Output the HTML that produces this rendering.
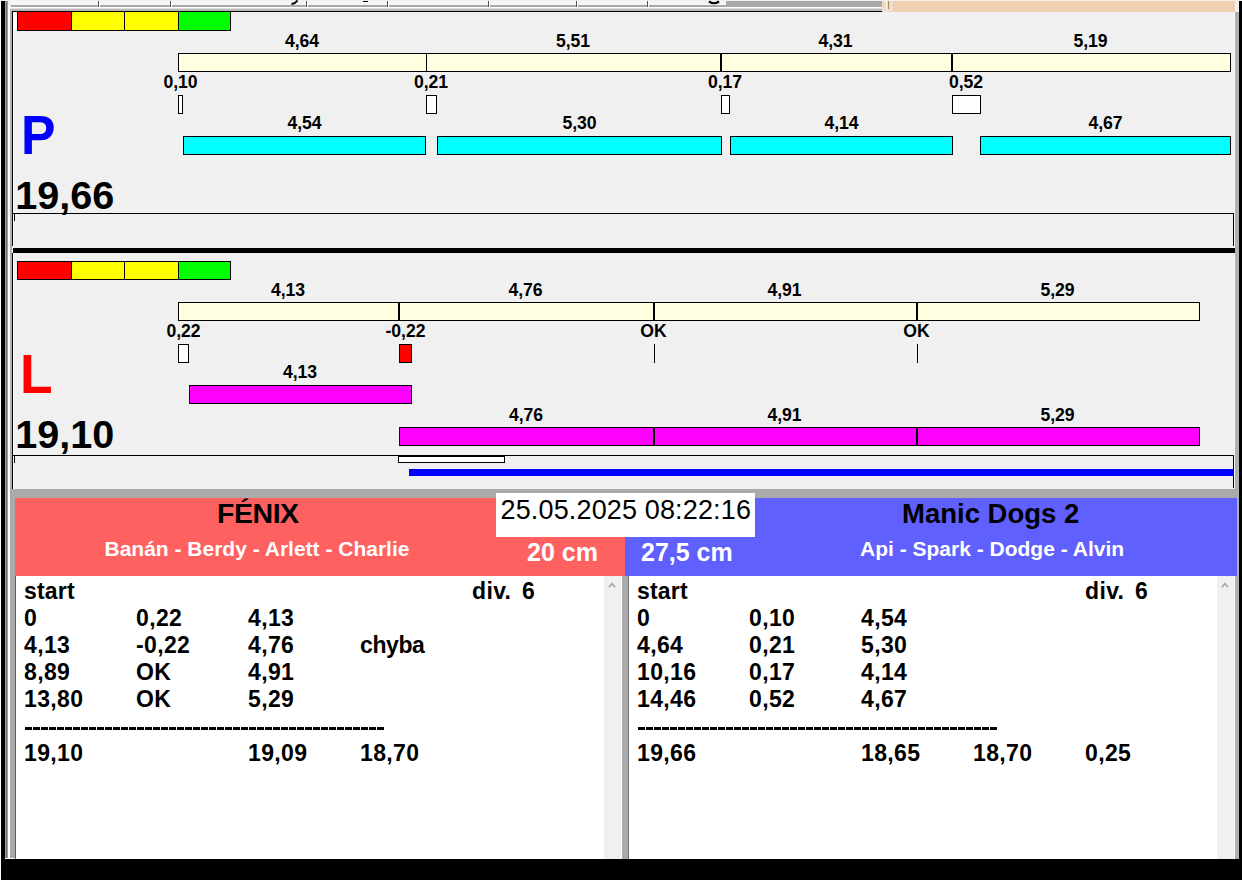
<!DOCTYPE html>
<html><head><meta charset="utf-8"><style>
html,body{margin:0;padding:0;width:1242px;height:880px;overflow:hidden;background:#f0f0f0;}
body{position:relative;font-family:"Liberation Sans",sans-serif;}
body>div,body>svg{position:absolute;white-space:pre;}
</style></head><body>
<div style="left:0px;top:0px;width:1242px;height:880px;background:#f0f0f0;"></div>
<div style="left:0px;top:0px;width:1px;height:859px;background:#ffffff;"></div>
<div style="left:1px;top:1px;width:4px;height:858px;background:#000;"></div>
<div style="left:5px;top:1px;width:1px;height:858px;background:#a0a0a0;"></div>
<div style="left:6px;top:1px;width:1px;height:858px;background:#6e6e6e;"></div>
<div style="left:7px;top:1px;width:1px;height:858px;background:#a0a0a0;"></div>
<div style="left:8px;top:7px;width:2px;height:852px;background:#ffffff;"></div>
<div style="left:10px;top:9px;width:2px;height:480px;background:#b0b0b0;"></div>
<div style="left:12px;top:11px;width:1px;height:478px;background:#000;"></div>
<div style="left:13px;top:12px;width:1px;height:477px;background:#ffffff;"></div>
<div style="left:11px;top:1px;width:715px;height:4px;background:#f6f6f6;"></div>
<div style="left:11px;top:5px;width:715px;height:2px;background:#a8a8a8;"></div>
<div style="left:98px;top:1px;width:1px;height:6px;background:#505050;"></div>
<div style="left:99px;top:1px;width:1px;height:6px;background:#ffffff;"></div>
<div style="left:170px;top:1px;width:1px;height:6px;background:#505050;"></div>
<div style="left:171px;top:1px;width:1px;height:6px;background:#ffffff;"></div>
<div style="left:306px;top:1px;width:1px;height:6px;background:#505050;"></div>
<div style="left:307px;top:1px;width:1px;height:6px;background:#ffffff;"></div>
<div style="left:387px;top:1px;width:1px;height:6px;background:#505050;"></div>
<div style="left:388px;top:1px;width:1px;height:6px;background:#ffffff;"></div>
<div style="left:488px;top:1px;width:1px;height:6px;background:#505050;"></div>
<div style="left:489px;top:1px;width:1px;height:6px;background:#ffffff;"></div>
<div style="left:576px;top:1px;width:1px;height:6px;background:#505050;"></div>
<div style="left:577px;top:1px;width:1px;height:6px;background:#ffffff;"></div>
<div style="left:647px;top:1px;width:1px;height:6px;background:#505050;"></div>
<div style="left:648px;top:1px;width:1px;height:6px;background:#ffffff;"></div>
<div style="left:726px;top:1px;width:1px;height:6px;background:#505050;"></div>
<div style="left:727px;top:1px;width:1px;height:6px;background:#ffffff;"></div>
<div style="left:726px;top:1px;width:156px;height:6px;background:#aaaaaa;"></div>
<div style="left:8px;top:7px;width:874px;height:1px;background:#ffffff;"></div>
<div style="left:10px;top:8px;width:872px;height:1px;background:#e0e0e0;"></div>
<div style="left:10px;top:9px;width:872px;height:2px;background:#b8b8b8;"></div>
<div style="left:12px;top:11px;width:870px;height:1px;background:#000;"></div>
<svg style="left:289px;top:0px" width="12" height="6"><path d="M2.5 3.5 Q5.5 4.5 8.5 0.5" stroke="#000" stroke-width="2" fill="none"/></svg>
<div style="left:363px;top:1px;width:5px;height:1px;background:#000;"></div>
<svg style="left:706px;top:0px" width="14" height="6"><path d="M3 1.5 Q8 5 13 1.5" stroke="#000" stroke-width="2.2" fill="none"/></svg>
<div style="left:882px;top:1px;width:353px;height:11px;background:#f0d0b0;"></div>
<div style="left:882px;top:1px;width:11px;height:11px;background:#eddccc;"></div>
<div style="left:886px;top:0px;width:1px;height:12px;background:#fff8e0;"></div>
<div style="left:888px;top:1px;width:1px;height:8px;background:#a08868;"></div>
<div style="left:1234px;top:12px;width:1px;height:847px;background:#f6f6f6;"></div>
<div style="left:1235px;top:12px;width:4px;height:847px;background:#b0b0b0;"></div>
<div style="left:1239px;top:1px;width:3px;height:879px;background:#000;"></div>
<div style="left:0px;top:859px;width:1242px;height:21px;background:#000;"></div>
<div style="left:0px;top:0px;width:1px;height:880px;background:#ffffff;"></div>
<div style="left:13px;top:12px;width:4px;height:18px;background:#ffffff;"></div>
<div style="left:17px;top:11px;width:212px;height:18px;background:#ff0000;border:1px solid #000;"></div>
<div style="left:71px;top:11px;width:1px;height:20px;background:#000;"></div>
<div style="left:72px;top:12px;width:52px;height:18px;background:#ffff00;"></div>
<div style="left:124px;top:11px;width:1px;height:20px;background:#000;"></div>
<div style="left:125px;top:12px;width:53px;height:18px;background:#ffff00;"></div>
<div style="left:178px;top:11px;width:1px;height:20px;background:#000;"></div>
<div style="left:179px;top:12px;width:51px;height:18px;background:#00ff00;"></div>
<div style="left:178px;top:53px;width:1051px;height:17px;background:#ffffe1;border:1px solid #000;"></div>
<div style="left:426px;top:53px;width:1px;height:19px;background:#000;"></div>
<div style="left:720px;top:53px;width:2px;height:19px;background:#000;"></div>
<div style="left:951px;top:53px;width:2px;height:19px;background:#000;"></div>
<div style="left:152.0px;width:300px;text-align:center;top:32.70px;font-size:17.6px;line-height:17.6px;font-weight:bold;color:#000;">4,64</div>
<div style="left:423.0px;width:300px;text-align:center;top:32.70px;font-size:17.6px;line-height:17.6px;font-weight:bold;color:#000;">5,51</div>
<div style="left:685.5px;width:300px;text-align:center;top:32.70px;font-size:17.6px;line-height:17.6px;font-weight:bold;color:#000;">4,31</div>
<div style="left:940.5px;width:300px;text-align:center;top:32.70px;font-size:17.6px;line-height:17.6px;font-weight:bold;color:#000;">5,19</div>
<div style="left:30.5px;width:300px;text-align:center;top:74.20px;font-size:17.6px;line-height:17.6px;font-weight:bold;color:#000;">0,10</div>
<div style="left:281px;width:300px;text-align:center;top:74.20px;font-size:17.6px;line-height:17.6px;font-weight:bold;color:#000;">0,21</div>
<div style="left:575px;width:300px;text-align:center;top:74.20px;font-size:17.6px;line-height:17.6px;font-weight:bold;color:#000;">0,17</div>
<div style="left:816px;width:300px;text-align:center;top:74.20px;font-size:17.6px;line-height:17.6px;font-weight:bold;color:#000;">0,52</div>
<div style="left:178px;top:95px;width:3px;height:17px;background:#ffffff;border:1px solid #000;"></div>
<div style="left:426px;top:95px;width:9px;height:17px;background:#ffffff;border:1px solid #000;"></div>
<div style="left:721px;top:95px;width:7px;height:17px;background:#ffffff;border:1px solid #000;"></div>
<div style="left:952px;top:95px;width:27px;height:17px;background:#ffffff;border:1px solid #000;"></div>
<div style="left:183px;top:136px;width:241px;height:17px;background:#00ffff;border:1px solid #000;"></div>
<div style="left:154.5px;width:300px;text-align:center;top:115.20px;font-size:17.6px;line-height:17.6px;font-weight:bold;color:#000;">4,54</div>
<div style="left:437px;top:136px;width:283px;height:17px;background:#00ffff;border:1px solid #000;"></div>
<div style="left:429.5px;width:300px;text-align:center;top:115.20px;font-size:17.6px;line-height:17.6px;font-weight:bold;color:#000;">5,30</div>
<div style="left:730px;top:136px;width:221px;height:17px;background:#00ffff;border:1px solid #000;"></div>
<div style="left:691.5px;width:300px;text-align:center;top:115.20px;font-size:17.6px;line-height:17.6px;font-weight:bold;color:#000;">4,14</div>
<div style="left:980px;top:136px;width:249px;height:17px;background:#00ffff;border:1px solid #000;"></div>
<div style="left:955.5px;width:300px;text-align:center;top:115.20px;font-size:17.6px;line-height:17.6px;font-weight:bold;color:#000;">4,67</div>
<div style="left:20.5px;top:107.64px;font-size:55px;line-height:55px;font-weight:bold;color:#0000ff;transform:scaleX(0.94);transform-origin:0 0;">P</div>
<div style="left:15.2px;top:176.08px;font-size:39.6px;line-height:39.6px;font-weight:bold;color:#000;">19,66</div>
<div style="left:13px;top:213px;width:1221px;height:1px;background:#000;"></div>
<div style="left:1233px;top:213px;width:1px;height:33px;background:#000;"></div>
<div style="left:14px;top:214px;width:1px;height:7px;background:#000;"></div>
<div style="left:13px;top:248px;width:1222px;height:5px;background:#000;"></div>
<div style="left:12px;top:246px;width:1px;height:7px;background:#ffffff;"></div>
<div style="left:17px;top:261px;width:212px;height:17px;background:#ff0000;border:1px solid #000;"></div>
<div style="left:71px;top:261px;width:1px;height:19px;background:#000;"></div>
<div style="left:72px;top:262px;width:52px;height:17px;background:#ffff00;"></div>
<div style="left:124px;top:261px;width:1px;height:19px;background:#000;"></div>
<div style="left:125px;top:262px;width:53px;height:17px;background:#ffff00;"></div>
<div style="left:178px;top:261px;width:1px;height:19px;background:#000;"></div>
<div style="left:179px;top:262px;width:51px;height:17px;background:#00ff00;"></div>
<div style="left:178px;top:302px;width:1020px;height:17px;background:#ffffe1;border:1px solid #000;"></div>
<div style="left:398px;top:302px;width:2px;height:19px;background:#000;"></div>
<div style="left:653px;top:302px;width:2px;height:19px;background:#000;"></div>
<div style="left:916px;top:302px;width:2px;height:19px;background:#000;"></div>
<div style="left:138.0px;width:300px;text-align:center;top:281.70px;font-size:17.6px;line-height:17.6px;font-weight:bold;color:#000;">4,13</div>
<div style="left:375.5px;width:300px;text-align:center;top:281.70px;font-size:17.6px;line-height:17.6px;font-weight:bold;color:#000;">4,76</div>
<div style="left:634.5px;width:300px;text-align:center;top:281.70px;font-size:17.6px;line-height:17.6px;font-weight:bold;color:#000;">4,91</div>
<div style="left:907.5px;width:300px;text-align:center;top:281.70px;font-size:17.6px;line-height:17.6px;font-weight:bold;color:#000;">5,29</div>
<div style="left:33.5px;width:300px;text-align:center;top:323.20px;font-size:17.6px;line-height:17.6px;font-weight:bold;color:#000;">0,22</div>
<div style="left:255.5px;width:300px;text-align:center;top:323.20px;font-size:17.6px;line-height:17.6px;font-weight:bold;color:#000;">-0,22</div>
<div style="left:503.5px;width:300px;text-align:center;top:323.20px;font-size:17.6px;line-height:17.6px;font-weight:bold;color:#000;">OK</div>
<div style="left:766.5px;width:300px;text-align:center;top:323.20px;font-size:17.6px;line-height:17.6px;font-weight:bold;color:#000;">OK</div>
<div style="left:178px;top:344px;width:9px;height:17px;background:#ffffff;border:1px solid #000;"></div>
<div style="left:399px;top:344px;width:11px;height:17px;background:#ff0000;border:1px solid #000;"></div>
<div style="left:654px;top:344px;width:1px;height:19px;background:#000;"></div>
<div style="left:917px;top:344px;width:1px;height:19px;background:#000;"></div>
<div style="left:189px;top:385px;width:221px;height:17px;background:#ff00ff;border:1px solid #000;"></div>
<div style="left:150px;width:300px;text-align:center;top:364.20px;font-size:17.6px;line-height:17.6px;font-weight:bold;color:#000;">4,13</div>
<div style="left:399px;top:427px;width:799px;height:17px;background:#ff00ff;border:1px solid #000;"></div>
<div style="left:653px;top:427px;width:2px;height:19px;background:#000;"></div>
<div style="left:916px;top:427px;width:2px;height:19px;background:#000;"></div>
<div style="left:376.0px;width:300px;text-align:center;top:406.70px;font-size:17.6px;line-height:17.6px;font-weight:bold;color:#000;">4,76</div>
<div style="left:634.5px;width:300px;text-align:center;top:406.70px;font-size:17.6px;line-height:17.6px;font-weight:bold;color:#000;">4,91</div>
<div style="left:907.5px;width:300px;text-align:center;top:406.70px;font-size:17.6px;line-height:17.6px;font-weight:bold;color:#000;">5,29</div>
<div style="left:20px;top:347.04px;font-size:55px;line-height:55px;font-weight:bold;color:#ff0000;transform:scaleX(0.97);transform-origin:0 0;">L</div>
<div style="left:15.2px;top:414.78px;font-size:39.6px;line-height:39.6px;font-weight:bold;color:#000;">19,10</div>
<div style="left:13px;top:455px;width:1221px;height:1px;background:#000;"></div>
<div style="left:1233px;top:455px;width:1px;height:33px;background:#000;"></div>
<div style="left:14px;top:456px;width:1px;height:7px;background:#000;"></div>
<div style="left:398px;top:456px;width:105px;height:5px;background:#ffffff;border:1px solid #000;"></div>
<div style="left:409px;top:469px;width:825px;height:7px;background:#0000ff;"></div>
<div style="left:10px;top:489px;width:1227px;height:9px;background:#aaaaaa;"></div>
<div style="left:10px;top:497px;width:5px;height:362px;background:#aaaaaa;"></div>
<div style="left:15px;top:576px;width:1px;height:283px;background:#606060;"></div>
<div style="left:15px;top:498px;width:610px;height:78px;background:#ff6060;"></div>
<div style="left:625px;top:498px;width:612px;height:78px;background:#6060ff;"></div>
<div style="left:16px;top:576px;width:588px;height:283px;background:#ffffff;"></div>
<div style="left:604px;top:576px;width:17px;height:283px;background:#f0f0f0;"></div>
<div style="left:621px;top:576px;width:1px;height:283px;background:#ffffff;"></div>
<div style="left:622px;top:576px;width:6px;height:283px;background:#aaaaaa;"></div>
<div style="left:628px;top:576px;width:1px;height:283px;background:#707070;"></div>
<div style="left:629px;top:576px;width:588px;height:283px;background:#ffffff;"></div>
<div style="left:1217px;top:576px;width:17px;height:283px;background:#f0f0f0;"></div>
<div style="left:1234px;top:576px;width:1px;height:283px;background:#ffffff;"></div>
<div style="left:1237px;top:489px;width:2px;height:370px;background:#b0b0b0;"></div>
<div style="left:5px;top:858px;width:10px;height:1px;background:#ffffff;"></div>
<svg style="left:606.6px;top:581px" width="10" height="8"><path d="M1.9 6.2 L5 2.6 L8.1 6.2" stroke="#a8a8a8" stroke-width="1.7" fill="none"/></svg>
<svg style="left:1219.5px;top:581px" width="10" height="8"><path d="M1.9 6.2 L5 2.6 L8.1 6.2" stroke="#a8a8a8" stroke-width="1.7" fill="none"/></svg>
<div style="left:496px;top:493px;width:259px;height:44px;background:#ffffff;"></div>
<div style="left:500.5px;top:496.64px;font-size:27px;line-height:27px;font-weight:normal;color:#000;letter-spacing:0.15px;">25.05.2025 08:22:16</div>
<div style="left:217px;top:498.87px;font-size:28.5px;line-height:28.5px;font-weight:bold;color:#000;letter-spacing:-0.45px;">FÉNIX</div>
<div style="left:104.5px;top:538.22px;font-size:21px;line-height:21px;font-weight:bold;color:#fff;">Banán - Berdy - Arlett - Charlie</div>
<div style="left:527px;top:539.54px;font-size:25px;line-height:25px;font-weight:bold;color:#fff;">20 cm</div>
<div style="left:902px;top:499.92px;font-size:27.5px;line-height:27.5px;font-weight:bold;color:#000;">Manic Dogs 2</div>
<div style="left:860px;top:538.22px;font-size:21px;line-height:21px;font-weight:bold;color:#fff;">Api - Spark - Dodge - Alvin</div>
<div style="left:641px;top:539.54px;font-size:25px;line-height:25px;font-weight:bold;color:#fff;">27,5 cm</div>
<div style="left:24.0px;top:580.03px;font-size:23px;line-height:23px;font-weight:bold;color:#000;letter-spacing:0.2px;">start</div>
<div style="left:24.0px;top:607.03px;font-size:23px;line-height:23px;font-weight:bold;color:#000;letter-spacing:0.35px;">0</div>
<div style="left:136.0px;top:607.03px;font-size:23px;line-height:23px;font-weight:bold;color:#000;letter-spacing:0.35px;">0,22</div>
<div style="left:248.0px;top:607.03px;font-size:23px;line-height:23px;font-weight:bold;color:#000;letter-spacing:0.35px;">4,13</div>
<div style="left:24.0px;top:634.03px;font-size:23px;line-height:23px;font-weight:bold;color:#000;letter-spacing:0.35px;">4,13</div>
<div style="left:136.0px;top:634.03px;font-size:23px;line-height:23px;font-weight:bold;color:#000;letter-spacing:0.35px;">-0,22</div>
<div style="left:248.0px;top:634.03px;font-size:23px;line-height:23px;font-weight:bold;color:#000;letter-spacing:0.35px;">4,76</div>
<div style="left:360.0px;top:634.03px;font-size:23px;line-height:23px;font-weight:bold;color:#000;letter-spacing:-0.4px;">chyba</div>
<div style="left:24.0px;top:661.03px;font-size:23px;line-height:23px;font-weight:bold;color:#000;letter-spacing:0.35px;">8,89</div>
<div style="left:136.0px;top:661.03px;font-size:23px;line-height:23px;font-weight:bold;color:#000;letter-spacing:0.35px;">OK</div>
<div style="left:248.0px;top:661.03px;font-size:23px;line-height:23px;font-weight:bold;color:#000;letter-spacing:0.35px;">4,91</div>
<div style="left:24.0px;top:688.03px;font-size:23px;line-height:23px;font-weight:bold;color:#000;letter-spacing:0.35px;">13,80</div>
<div style="left:136.0px;top:688.03px;font-size:23px;line-height:23px;font-weight:bold;color:#000;letter-spacing:0.35px;">OK</div>
<div style="left:248.0px;top:688.03px;font-size:23px;line-height:23px;font-weight:bold;color:#000;letter-spacing:0.35px;">5,29</div>
<div style="left:25.0px;top:727px;width:359.0px;height:3px;background:repeating-linear-gradient(90deg,#000 0 7px,transparent 7px 8px);"></div>
<div style="left:24.0px;top:742.03px;font-size:23px;line-height:23px;font-weight:bold;color:#000;letter-spacing:0.35px;">19,10</div>
<div style="left:248.0px;top:742.03px;font-size:23px;line-height:23px;font-weight:bold;color:#000;letter-spacing:0.35px;">19,09</div>
<div style="left:360.0px;top:742.03px;font-size:23px;line-height:23px;font-weight:bold;color:#000;letter-spacing:0.35px;">18,70</div>
<div style="left:472.0px;top:579.83px;font-size:23px;line-height:23px;font-weight:bold;color:#000;letter-spacing:0.35px;">div.</div>
<div style="left:522.0px;top:579.83px;font-size:23px;line-height:23px;font-weight:bold;color:#000;">6</div>
<div style="left:637.0px;top:580.03px;font-size:23px;line-height:23px;font-weight:bold;color:#000;letter-spacing:0.2px;">start</div>
<div style="left:637.0px;top:607.03px;font-size:23px;line-height:23px;font-weight:bold;color:#000;letter-spacing:0.35px;">0</div>
<div style="left:749.0px;top:607.03px;font-size:23px;line-height:23px;font-weight:bold;color:#000;letter-spacing:0.35px;">0,10</div>
<div style="left:861.0px;top:607.03px;font-size:23px;line-height:23px;font-weight:bold;color:#000;letter-spacing:0.35px;">4,54</div>
<div style="left:637.0px;top:634.03px;font-size:23px;line-height:23px;font-weight:bold;color:#000;letter-spacing:0.35px;">4,64</div>
<div style="left:749.0px;top:634.03px;font-size:23px;line-height:23px;font-weight:bold;color:#000;letter-spacing:0.35px;">0,21</div>
<div style="left:861.0px;top:634.03px;font-size:23px;line-height:23px;font-weight:bold;color:#000;letter-spacing:0.35px;">5,30</div>
<div style="left:637.0px;top:661.03px;font-size:23px;line-height:23px;font-weight:bold;color:#000;letter-spacing:0.35px;">10,16</div>
<div style="left:749.0px;top:661.03px;font-size:23px;line-height:23px;font-weight:bold;color:#000;letter-spacing:0.35px;">0,17</div>
<div style="left:861.0px;top:661.03px;font-size:23px;line-height:23px;font-weight:bold;color:#000;letter-spacing:0.35px;">4,14</div>
<div style="left:637.0px;top:688.03px;font-size:23px;line-height:23px;font-weight:bold;color:#000;letter-spacing:0.35px;">14,46</div>
<div style="left:749.0px;top:688.03px;font-size:23px;line-height:23px;font-weight:bold;color:#000;letter-spacing:0.35px;">0,52</div>
<div style="left:861.0px;top:688.03px;font-size:23px;line-height:23px;font-weight:bold;color:#000;letter-spacing:0.35px;">4,67</div>
<div style="left:638.0px;top:727px;width:359.0px;height:3px;background:repeating-linear-gradient(90deg,#000 0 7px,transparent 7px 8px);"></div>
<div style="left:637.0px;top:742.03px;font-size:23px;line-height:23px;font-weight:bold;color:#000;letter-spacing:0.35px;">19,66</div>
<div style="left:861.0px;top:742.03px;font-size:23px;line-height:23px;font-weight:bold;color:#000;letter-spacing:0.35px;">18,65</div>
<div style="left:973.0px;top:742.03px;font-size:23px;line-height:23px;font-weight:bold;color:#000;letter-spacing:0.35px;">18,70</div>
<div style="left:1085.0px;top:742.03px;font-size:23px;line-height:23px;font-weight:bold;color:#000;letter-spacing:0.35px;">0,25</div>
<div style="left:1085.0px;top:579.83px;font-size:23px;line-height:23px;font-weight:bold;color:#000;letter-spacing:0.35px;">div.</div>
<div style="left:1135.0px;top:579.83px;font-size:23px;line-height:23px;font-weight:bold;color:#000;">6</div>
</body></html>
